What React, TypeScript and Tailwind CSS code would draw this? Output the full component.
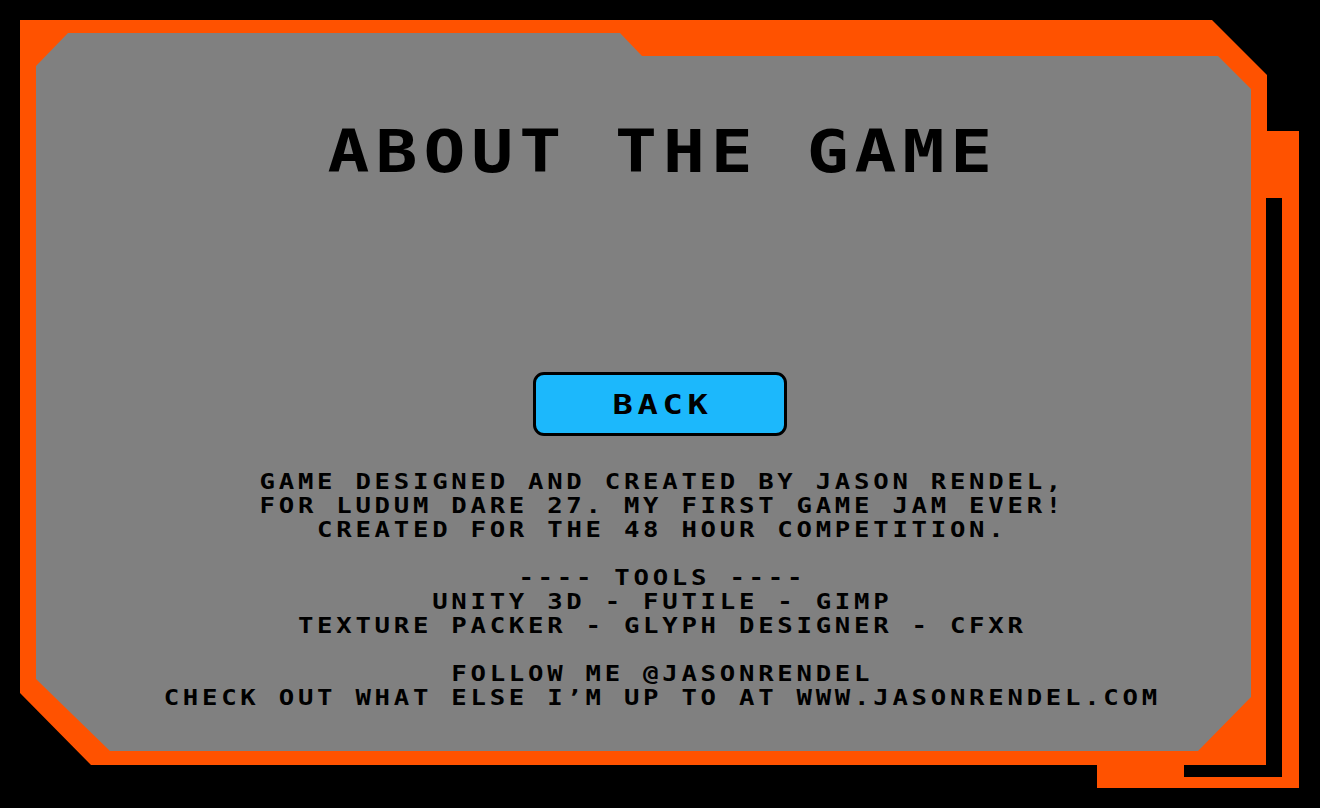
export default function App() {
  const lines = [
    "GAME DESIGNED AND CREATED BY JASON RENDEL,",
    "FOR LUDUM DARE 27. MY FIRST GAME JAM EVER!",
    "CREATED FOR THE 48 HOUR COMPETITION.",
    "",
    "---- TOOLS ----",
    "UNITY 3D - FUTILE - GIMP",
    "TEXTURE PACKER - GLYPH DESIGNER - CFXR",
    "",
    "FOLLOW ME @JASONRENDEL",
    "CHECK OUT WHAT ELSE I\u2019M UP TO AT WWW.JASONRENDEL.COM",
  ];
  return (
    <div className="w-[1320px] h-[808px] bg-black pt-[20px] pl-[20px] overflow-hidden font-['DejaVu_Sans_Mono',monospace] font-bold text-black">
      <div className="relative w-[1279px] h-[768px] bg-[#ff5200] pt-[13px] pl-[16px] [clip-path:polygon(0_0,1192px_0,1247px_55px,1247px_111px,1279px_111px,1279px_768px,1077px_768px,1077px_745px,71px_745px,0_673px)]">
        <div className="w-[1215px] h-[718px] bg-[#808080] pl-[33px] pt-[90px] flex flex-col items-center [clip-path:polygon(32px_0,584px_0,606px_23px,1182px_23px,1215px_56px,1215px_664px,1162px_718px,74px_718px,0_646px,0_33px)]">
          <h1 className="text-[58px] leading-[58px] tracking-[5px] pl-[5px] [transform:scaleX(1.2)] whitespace-pre">
            ABOUT THE GAME
          </h1>
          <button className="mt-[191px] w-[254px] h-[64px] rounded-[11px] border-[3px] border-black bg-[#1cb8fc] flex items-center justify-center">
            <span className="text-[27px] leading-[27px] tracking-[3.75px] pl-[4px] [transform:scaleX(1.25)]">
              BACK
            </span>
          </button>
          <div className="mt-[34px] text-[20.5px] leading-[24px] tracking-[3px] pl-[3px] [transform:scaleX(1.25)] flex flex-col items-center">
            {lines.map((l, i) =>
              l ? (
                <div key={i} className="whitespace-pre">
                  {l}
                </div>
              ) : (
                <div key={i} className="h-[24px]" />
              )
            )}
          </div>
        </div>
        <div className="absolute left-[1164px] top-[178px] w-[98px] h-[579px] border-r-[16px] border-b-[12px] border-black" />
      </div>
    </div>
  );
}
